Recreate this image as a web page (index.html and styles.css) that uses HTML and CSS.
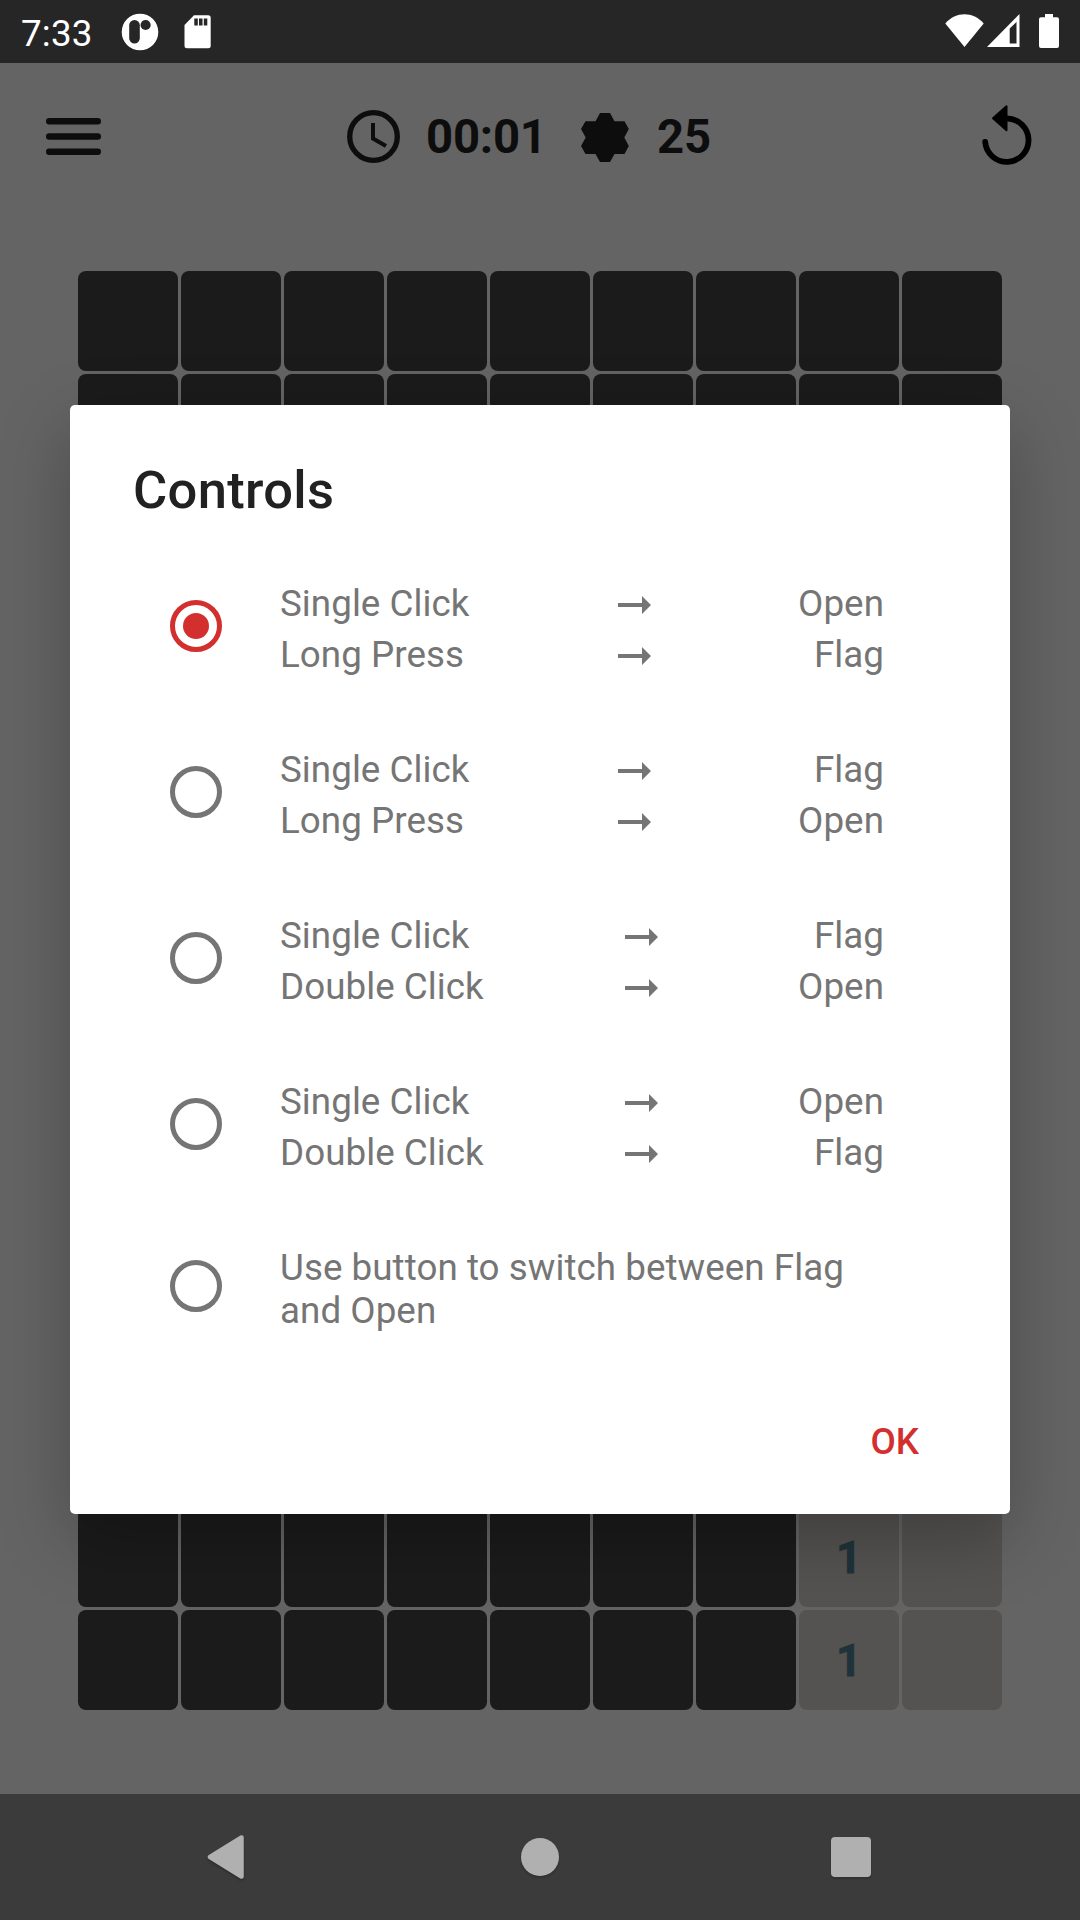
FILE: index.html
```html
<!DOCTYPE html>
<html lang="en">
<head>
<meta charset="utf-8">
<title>Controls</title>
<link rel="stylesheet" href="styles.css">
</head>
<body>
<svg class="defs" aria-hidden="true">
  <symbol id="arrow" viewBox="0 0 33 18"><path d="M0 7h24V0l9 9-9 9v-7H0z" fill="currentColor"/></symbol>
</svg>
<div class="screen">
  <header class="status">
    <span class="clock">7:33</span>
    <svg class="status-app" width="38" height="38" viewBox="0 0 38 38"><circle cx="19" cy="19" r="18.3" fill="#fff"/><rect x="8.2" y="7" width="10.6" height="23.6" rx="5.3" fill="#262626"/><circle cx="24.6" cy="12" r="5.1" fill="#262626"/></svg>
    <svg class="status-sd" width="27" height="34" viewBox="0 0 27 34"><path d="M10 .3h14.200a2.500 2.500 0 0 1 2.500 2.500v28a2.500 2.500 0 0 1-2.500 2.500H3a2.500 2.500 0 0 1-2.500-2.500V10z" fill="#fff"/><path d="M10.300 3.500h3.500v7h-3.500zM15 3.500h3.500v7H15zM19.800 3.500h3.500v7h-3.500z" fill="#262626"/></svg>
    <span class="spacer"></span>
    <svg class="status-wifi" width="39" height="34" viewBox="0 0 39 34"><path d="M.3 9.400C11-2.800 28-2.800 38.700 9.400L19.500 33z" fill="#fff"/></svg>
    <svg class="status-cell" width="33" height="33" viewBox="0 0 33 33"><path d="M0 33 32.500 0v33zM22.700 14.500V29.500H29.500V8z" fill="#fff" fill-rule="evenodd"/></svg>
    <svg class="status-battery" width="20" height="34" viewBox="0 0 20 34"><path d="M6 0h8v3.300h4a2 2 0 0 1 2 2V32a2 2 0 0 1-2 2H2a2 2 0 0 1-2-2V5.300a2 2 0 0 1 2-2h4z" fill="#fff"/></svg>
  </header>

  <div class="toolbar">
    <svg class="menu" width="55" height="37" viewBox="0 0 55 37"><path d="M3.200 3.200h48.600M3.200 18.500h48.600M3.200 33.800h48.600" stroke="#0d0d0d" stroke-width="6.400" stroke-linecap="round"/></svg>
    <svg class="timer-icon" width="54" height="54" viewBox="0 0 54 54" fill="none" stroke="#0d0d0d"><circle cx="26.500" cy="26.500" r="23.800" stroke-width="5.300"/><path d="M26 13V28.500L39 36" stroke-width="4"/></svg>
    <span class="timer">00:01</span>
    <svg class="mine-icon" width="48" height="49" viewBox="0 0 48 49"><path d="M19 0h10l4.500 8.200H43.500L47.800 16 43.300 24.500 47.800 33 43.500 41H33.500L29 49H19L14.500 41H4.500L0 33 4.700 24.500 0 16 4.500 8.200h10z" fill="#0d0d0d"/></svg>
    <span class="mines">25</span>
    <span class="spacer"></span>
    <svg class="restart" width="50" height="60" viewBox="0 0 50 60"><path d="M24.800 13.500A21.700 21.700 0 1 1 3.200 37" fill="none" stroke="#000" stroke-width="5.800" stroke-linecap="round"/><path d="M24.500 1.300V25.200L11 13.300z" fill="#000" stroke="#000" stroke-width="2" stroke-linejoin="round"/></svg>
  </div>

  <main class="board" id="board"></main>

  <nav class="nav">
    <svg width="40" height="46" viewBox="0 0 40 46"><path d="M34.500 3.500V42.500L3 23z" fill="#b0b0b0" stroke="#b0b0b0" stroke-width="4.500" stroke-linejoin="round"/></svg>
    <span class="home"></span>
    <span class="recent"></span>
  </nav>

  <section class="dialog" role="dialog">
    <h1>Controls</h1>
    <div class="options">
      <div class="option"><span class="radio checked"></span>
        <div class="mapping"><span>Single Click</span><svg><use href="#arrow"/></svg><span class="action">Open</span><span>Long Press</span><svg><use href="#arrow"/></svg><span class="action">Flag</span></div></div>
      <div class="option"><span class="radio"></span>
        <div class="mapping"><span>Single Click</span><svg><use href="#arrow"/></svg><span class="action">Flag</span><span>Long Press</span><svg><use href="#arrow"/></svg><span class="action">Open</span></div></div>
      <div class="option"><span class="radio"></span>
        <div class="mapping"><span>Single Click</span><svg><use href="#arrow"/></svg><span class="action">Flag</span><span>Double Click</span><svg><use href="#arrow"/></svg><span class="action">Open</span></div></div>
      <div class="option"><span class="radio"></span>
        <div class="mapping"><span>Single Click</span><svg><use href="#arrow"/></svg><span class="action">Open</span><span>Double Click</span><svg><use href="#arrow"/></svg><span class="action">Flag</span></div></div>
      <div class="option last"><span class="radio"></span>
        <p>Use button to switch between Flag and Open</p></div>
    </div>
    <button class="ok">OK</button>
  </section>
</div>
<script src="board.js"></script>
</body>
</html>
```
FILE: styles.css
```css
* { box-sizing: border-box; }
body {
  margin: 0;
  font-family: Roboto, "Liberation Sans", sans-serif;
}
.defs { display: none; }
.screen {
  position: relative;
  display: flex;
  flex-direction: column;
  width: 1080px;
  height: 1920px;
  overflow: hidden;
  background: #646464;
}
.screen svg { flex: none; }
.spacer { flex: 1; }

.status {
  display: flex;
  align-items: flex-start;
  height: 63px;
  padding: 13px 21px 0 21px;
  background: #262626;
  color: #fff;
}
.clock { width: 100px; font-size: 36.75px; line-height: 42px; letter-spacing: .2px; }
.status-sd { margin: 2px 0 0 25px; }
.status-wifi { margin: 1px 3px 0 0; }
.status-cell { margin: 1px 19px 0 0; }
.status-battery { margin-top: 1px; }

.toolbar {
  display: flex;
  align-items: center;
  height: 148px;
  margin-bottom: 60px;
  padding: 0 48px 0 46px;
  color: #0d0d0d;
  font-size: 47.25px;
  font-weight: 700;
}
.menu { margin-bottom: 2px; }
.timer-icon { margin: 0 25px 0 246px; }
.timer { width: 155px; letter-spacing: -.2px; }
.mine-icon { margin-right: 28px; }
.mines { letter-spacing: -.2px; }
.restart { margin-bottom: 5px; }

.board {
  display: grid;
  grid-template-columns: repeat(9, 100px);
  grid-auto-rows: 100px;
  gap: 3px;
  padding-left: 78px;
}
.cell {
  display: flex;
  align-items: center;
  justify-content: center;
  border-radius: 8px;
  background: #1b1b1b;
}
.cell.open {
  padding-top: 1px;
  background: #555351;
  color: #20333a;
  font-size: 45px;
  font-weight: 700;
  -webkit-text-stroke: .8px #20333a;
}

.nav {
  display: flex;
  align-items: center;
  gap: 271px;
  height: 126px;
  margin-top: auto;
  padding-left: 207px;
  background: #3b3b3b;
}
.nav svg, .home, .recent { filter: drop-shadow(0 2px 1px rgba(0, 0, 0, .2)); }
.home { width: 38px; height: 38px; margin-left: 3px; border-radius: 50%; background: #b0b0b0; }
.recent { width: 40px; height: 40px; margin-left: 1px; border-radius: 4px; background: #b0b0b0; }

.dialog {
  position: absolute;
  left: 70px;
  top: 405px;
  width: 940px;
  height: 1109px;
  display: flex;
  flex-direction: column;
  border-radius: 5px;
  background: #fff;
  box-shadow: 0 24px 70px rgba(0, 0, 0, .26);
}
.dialog h1 {
  margin: 54px 0 0 63px;
  color: #212121;
  font-size: 52.5px;
  font-weight: 500;
  letter-spacing: .3px;
  line-height: 62px;
}
.options {
  display: flex;
  flex-direction: column;
  padding: 57px 125.5px 0 100px;
  color: #757575;
  font-size: 36.75px;
  letter-spacing: .05px;
}
.option { display: flex; gap: 58px; height: 166px; }
.radio {
  flex: none;
  display: grid;
  place-items: center;
  width: 52px;
  height: 52px;
  margin-top: 22px;
  border: 5px solid #757575;
  border-radius: 50%;
}
.radio.checked { border-color: #d32f2f; }
.radio.checked::after {
  content: "";
  width: 26px;
  height: 26px;
  border-radius: 50%;
  background: #d32f2f;
}
.mapping {
  flex: 1;
  display: grid;
  grid-template-columns: repeat(3, max-content);
  grid-auto-rows: 51px;
  justify-content: space-between;
  line-height: 51px;
}
.mapping svg { width: 33px; height: 18px; margin: 18px 0 0 1px; }
.action { padding-right: .5px; text-align: right; }
.option.last .radio { margin-top: 18px; }
.option p { margin: 4px 0 0; line-height: 43px; }
.ok {
  align-self: flex-end;
  margin: 12px 91px 0 0;
  padding: 0;
  border: 0;
  background: none;
  color: #d32f2f;
  font: 500 36.75px/43px Roboto, sans-serif;
}
```
FILE: board.js
```js
const ROWS = 14;
const COLUMNS = 9;
const opened = { "12,7": "1", "12,8": "", "13,7": "1", "13,8": "" };
const board = document.getElementById("board");

for (let row = 0; row < ROWS; row++) {
  for (let column = 0; column < COLUMNS; column++) {
    const cell = document.createElement("div");
    const value = opened[`${row},${column}`];
    cell.className = value === undefined ? "cell" : "cell open";
    cell.textContent = value || "";
    board.append(cell);
  }
}
```
